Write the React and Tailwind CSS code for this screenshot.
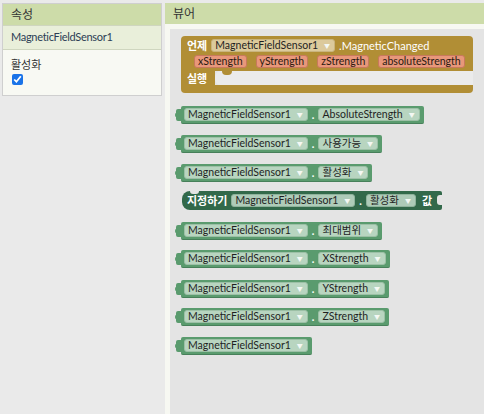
// App.jsx
// ============================================================
// Éditeur de blocs — panneau Propriétés + Visionneuse (blocs)
// ============================================================

const FONT = "font-['Lato','Noto_Sans_CJK_KR',sans-serif]";

// ── Champ déroulant dans un bloc ──
function Field({ children, tone = 'green' }) {
  const tones = {
    green: 'bg-[#b8d5c0] border-[#9cc0a6]',
    dark: 'bg-[#aecbb8] border-[#8fb39c]',
    gold: 'bg-[#dcca9c] border-[#c9b47e]',
  };
  return (
    <span
      className={`flex items-center h-[13px] pl-[3px] pr-[4px] gap-[6px] rounded-[3px] border text-[10.5px] leading-none text-[#1f1f1f] ${tones[tone]}`}
    >
      <span>{children}</span>
      <span className="text-[6px] text-[#f4f8f4]">▼</span>
    </span>
  );
}

// ── Paramètre (pastille orange) ──
function Param({ children }) {
  return (
    <span className="flex items-center h-[13px] px-[3px] rounded-[3px] border border-[#c7795c] bg-[#e8977a] text-[10.5px] leading-none text-[#2a1a12]">
      {children}
    </span>
  );
}

// ── Tenon de sortie à gauche ──
function OutputTab() {
  return (
    <svg className="absolute left-[-6px] top-[3px]" width="7" height="12" viewBox="0 0 7 12">
      <path d="M7 0 H3 Q1 0 1 2 V4 Q0 4 0 6 Q0 8 1 8 V10 Q1 12 3 12 H7 Z" fill="#5a9b6e" />
    </svg>
  );
}

function Getter({ prop, className = '' }) {
  return (
    <div
      className={`relative self-start flex items-center h-[18px] ml-[11px] pl-[3px] pr-[4px] gap-[4px] rounded-[2px] bg-[#5a9b6e] border-b border-[#47805a] ${className}`}
    >
      <OutputTab />
      <Field>MagneticFieldSensor1</Field>
      {prop && (
        <>
          <span className="text-white text-[11px] leading-none font-bold">.</span>
          <Field>{prop}</Field>
        </>
      )}
    </div>
  );
}

function EventBlock() {
  return (
    <div className="self-start flex flex-col ml-[11px] mt-[7px] w-[292px]">
      {/* ── Haut : en-tête + paramètres ── */}
      <div className="flex flex-col gap-[3px] bg-[#b18e35] rounded-t-[4px] pt-[3px] pb-[3px] pl-[6px]">
        <div className="flex items-center gap-[4px] h-[13px]">
          <span className="text-white text-[11px] font-bold leading-none">언제</span>
          <Field tone="gold">MagneticFieldSensor1</Field>
          <span className="text-white text-[11px] leading-none">.MagneticChanged</span>
        </div>
        <div className="flex items-center gap-[9px] pl-[7px] h-[13px]">
          <Param>xStrength</Param>
          <Param>yStrength</Param>
          <Param>zStrength</Param>
          <Param>absoluteStrength</Param>
        </div>
      </div>
      {/* ── Milieu : « 실행 » + entrée d'instruction ── */}
      <div className="flex h-[14px]">
        <div className="w-[34px] bg-[#b18e35] flex items-center pl-[6px]">
          <span className="text-white text-[11px] font-bold leading-none">실행</span>
        </div>
        <div className="relative flex-1 bg-[#ebebeb] rounded-tl-[6px] rounded-bl-[6px]">
          <span className="absolute left-[7px] top-0 w-[10px] h-[4px] bg-[#b18e35] rounded-b-[5px]" />
        </div>
      </div>
      {/* ── Bas ── */}
      <div className="h-[8px] bg-[#b18e35] rounded-b-[4px]" />
    </div>
  );
}

function SetterBlock() {
  return (
    <div className="relative self-start flex items-center h-[19px] ml-[12px] mt-[9px] pl-[5px] pr-[10px] gap-[4px] rounded-l-[8px] rounded-r-[2px] bg-[#32694a]">
      <span className="absolute left-[8px] top-0 w-[9px] h-[3px] bg-[#e4e4e4] rounded-b-[4px]" />
      <span className="text-white text-[11px] font-bold leading-none">지정하기</span>
      <Field tone="dark">MagneticFieldSensor1</Field>
      <span className="text-white text-[11px] leading-none font-bold">.</span>
      <Field tone="dark">활성화</Field>
      <span className="text-white text-[11px] font-bold leading-none ml-[2px]">값</span>
      <span className="absolute right-0 top-[4px] w-[5px] h-[10px] bg-[#e4e4e4] rounded-l-[3px]" />
    </div>
  );
}

export default function App() {
  return (
    <div className={`w-[484px] h-[414px] overflow-hidden flex bg-[#eaeaea] ${FONT}`}>

      {/* ── Gauche : panneau Propriétés ── */}
      <div className="w-[165px] shrink-0 pt-[3px] pl-[2px] pr-[3px]">
        <div className="border border-[#cfcfcf] bg-[#f8f9f3]">
          <div className="h-[21px] flex items-center px-[8px] bg-[#cddca9] text-[12px] text-[#333]">
            속성
          </div>
          <div className="h-[25px] flex items-center px-[8px] bg-[#e9efda] border-y border-[#cfd6bf] text-[11px] tracking-[-0.3px] text-[#2c3e55]">
            MagneticFieldSensor1
          </div>
          <div className="px-[8px] pt-[9px] pb-[10px]">
            <div className="text-[11px] text-[#333] leading-none">활성화</div>
            <input
              type="checkbox"
              defaultChecked
              className="block mt-[4px] ml-[1px] w-[11px] h-[11px] accent-[#1a73e8]"
            />
          </div>
        </div>
      </div>

      {/* ── Droite : visionneuse ── */}
      <div className="flex-1 flex flex-col pt-[3px] min-w-0">
        <div className="h-[21px] flex items-center px-[8px] bg-[#cddca9] text-[12px] text-[#333]">
          뷰어
        </div>
        <div className="flex-1 flex bg-[#f7f8f2] pl-[5px] pt-[5px]">
          <div className="flex-1 flex flex-col bg-[#e4e4e4] overflow-hidden">
            <EventBlock />
            <Getter prop="AbsoluteStrength" className="mt-[13px]" />
            <Getter prop="사용가능" className="mt-[11px]" />
            <Getter prop="활성화" className="mt-[11px]" />
            <SetterBlock />
            <Getter prop="최대범위" className="mt-[12px]" />
            <Getter prop="XStrength" className="mt-[10px]" />
            <Getter prop="YStrength" className="mt-[12px]" />
            <Getter prop="ZStrength" className="mt-[10px]" />
            <Getter className="mt-[11px]" />
          </div>
        </div>
      </div>
    </div>
  );
}
